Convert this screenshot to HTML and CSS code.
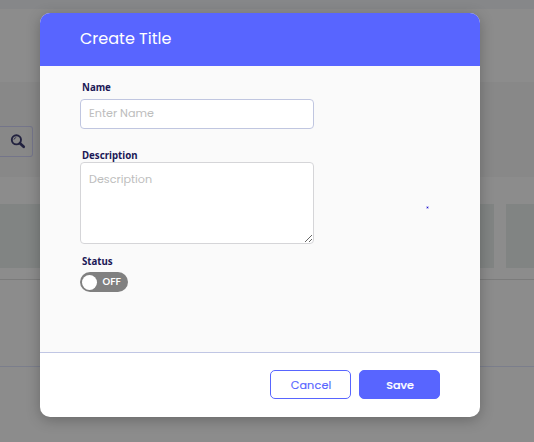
FILE: index.html
```html
<!DOCTYPE html>
<html lang="en">
<head>
<meta charset="utf-8">
<title>Create Title</title>
<link rel="stylesheet" href="styles.css">
</head>
<body>
<div class="page">
  <div class="topbar"></div>
  <div class="heading"></div>
  <div class="toolbar">
    <div class="search">
      <svg width="16" height="16" viewBox="0 0 16 16" fill="none" stroke="#22223f">
        <circle cx="6.4" cy="5.8" r="4.6" stroke-width="1.9"/>
        <path d="M3.9 5.7A2.5 2.5 0 0 1 6.2 3.6" stroke-width=".8"/>
        <path d="M9.9 9.2L13.7 12.8" stroke-width="2.7" stroke-linecap="round"/>
      </svg>
    </div>
  </div>
  <div class="columns"><div class="column"></div><div class="column last"></div></div>
  <div class="row"></div>
  <div class="row tall"></div>
</div>
<form class="modal">
  <header class="modal-head">Create Title</header>
  <main class="modal-body">
    <label class="label name" for="name"><span>Name</span></label>
    <input class="field" id="name" placeholder="Enter Name">
    <label class="label desc" for="desc"><span>Description</span></label>
    <textarea class="field area" id="desc" placeholder="Description"></textarea>
    <div class="label status"><span>Status</span></div>
    <div class="toggle"><span class="knob"></span><span class="state">OFF</span></div>
    <span class="dot"></span>
  </main>
  <footer class="modal-foot">
    <button type="button" class="btn cancel"><span>Cancel</span></button>
    <button type="button" class="btn save"><span>Save</span></button>
  </footer>
</form>
</body>
</html>
```
FILE: styles.css
```css
* { box-sizing: border-box; }
body { margin: 0; height: 442px; overflow: hidden; background: #8c8c8c; font-family: Poppins, Inter, sans-serif; }
.topbar { height: 9px; background: #868789; }
.heading { height: 73px; }
.toolbar { height: 95px; padding-top: 44px; background: #888; }
.search { display: flex; align-items: center; justify-content: flex-end; width: 33px; height: 31px; padding-right: 6px; border: 1px solid #74758a; border-left: 0; border-radius: 0 3px 3px 0; }
.columns { display: flex; gap: 12px; height: 103px; padding: 27px 0 12px; border-bottom: 1px solid #7b7b7b; }
.column { width: 494px; height: 64px; background: #818483; }
.column.last { width: 28px; }
.row { height: 87px; border-bottom: 1px solid #7b7e8c; }
.row.tall { border: 0; }

.modal { position: absolute; left: 40px; top: 13px; display: flex; flex-direction: column; width: 440px; height: 404px; border-radius: 10px; overflow: hidden; background: #fff; box-shadow: 0 3px 14px rgba(0, 0, 0, .25); }
.modal-head { height: 53px; padding: 0 40px; background: #5865ff; color: #fff; font-size: 16px; line-height: 51px; letter-spacing: 0; }
.modal-body { position: relative; display: flex; flex-direction: column; align-items: flex-start; height: 287px; padding: 14px 40px 0; background: #fafafa; border-bottom: 1px solid #c0c6e4; }
.label { height: 15px; padding-left: 2px; color: #1b1856; font: bold 9.7px/16px "Noto Sans", sans-serif; white-space: nowrap; }
.field { display: block; width: 234px; height: 30px; margin: 4px 0 0; padding: 0 8px 2px; border: 1px solid #c0c6e0; border-radius: 4px; outline: 0; background: #fff; color: #333; font: 11.2px/17px Poppins, Inter, sans-serif; }
.field::placeholder { color: #bdbdbd; opacity: 1; }
.label.desc { margin-top: 19px; }
.area { height: 82px; margin-top: -1px; padding: 8px; border-color: #d5d5d8; resize: both; }
.label.desc, .label.status { flex: none; }
.label.desc + .area { margin-top: -1px; }
.label.status { margin-top: 10px; }
.toggle { display: flex; align-items: center; width: 48px; height: 20px; margin-top: 3px; padding-left: 2px; border-radius: 10px; background: #808080; }
.knob { width: 15px; height: 15px; margin-left: -.5px; border-radius: 50%; background: #fff; }
.state { margin-left: 6px; color: #fff; font: bold 9.5px/18px Lato, sans-serif; }
.dot { position: absolute; left: 387px; top: 141px; width: 1px; height: 1px; background: #1b10c8; box-shadow: 0 0 0 1px #c8c5f2; }
.modal-foot { display: flex; justify-content: flex-end; gap: 8px; padding: 17px 40px 0; }
.btn { width: 81px; height: 29px; padding: 1px 0 0 1px; border: 1px solid #5865ff; border-radius: 5px; background: #fff; color: #5865ff; font: 500 11.2px/27px Poppins, Inter, sans-serif; }
.btn.cancel { font-weight: 400; letter-spacing: .15px; -webkit-text-stroke: .15px #5865ff; }
.btn.save { background: #5865ff; color: #fff; font-weight: 500; -webkit-text-stroke: .2px #fff; }
```
